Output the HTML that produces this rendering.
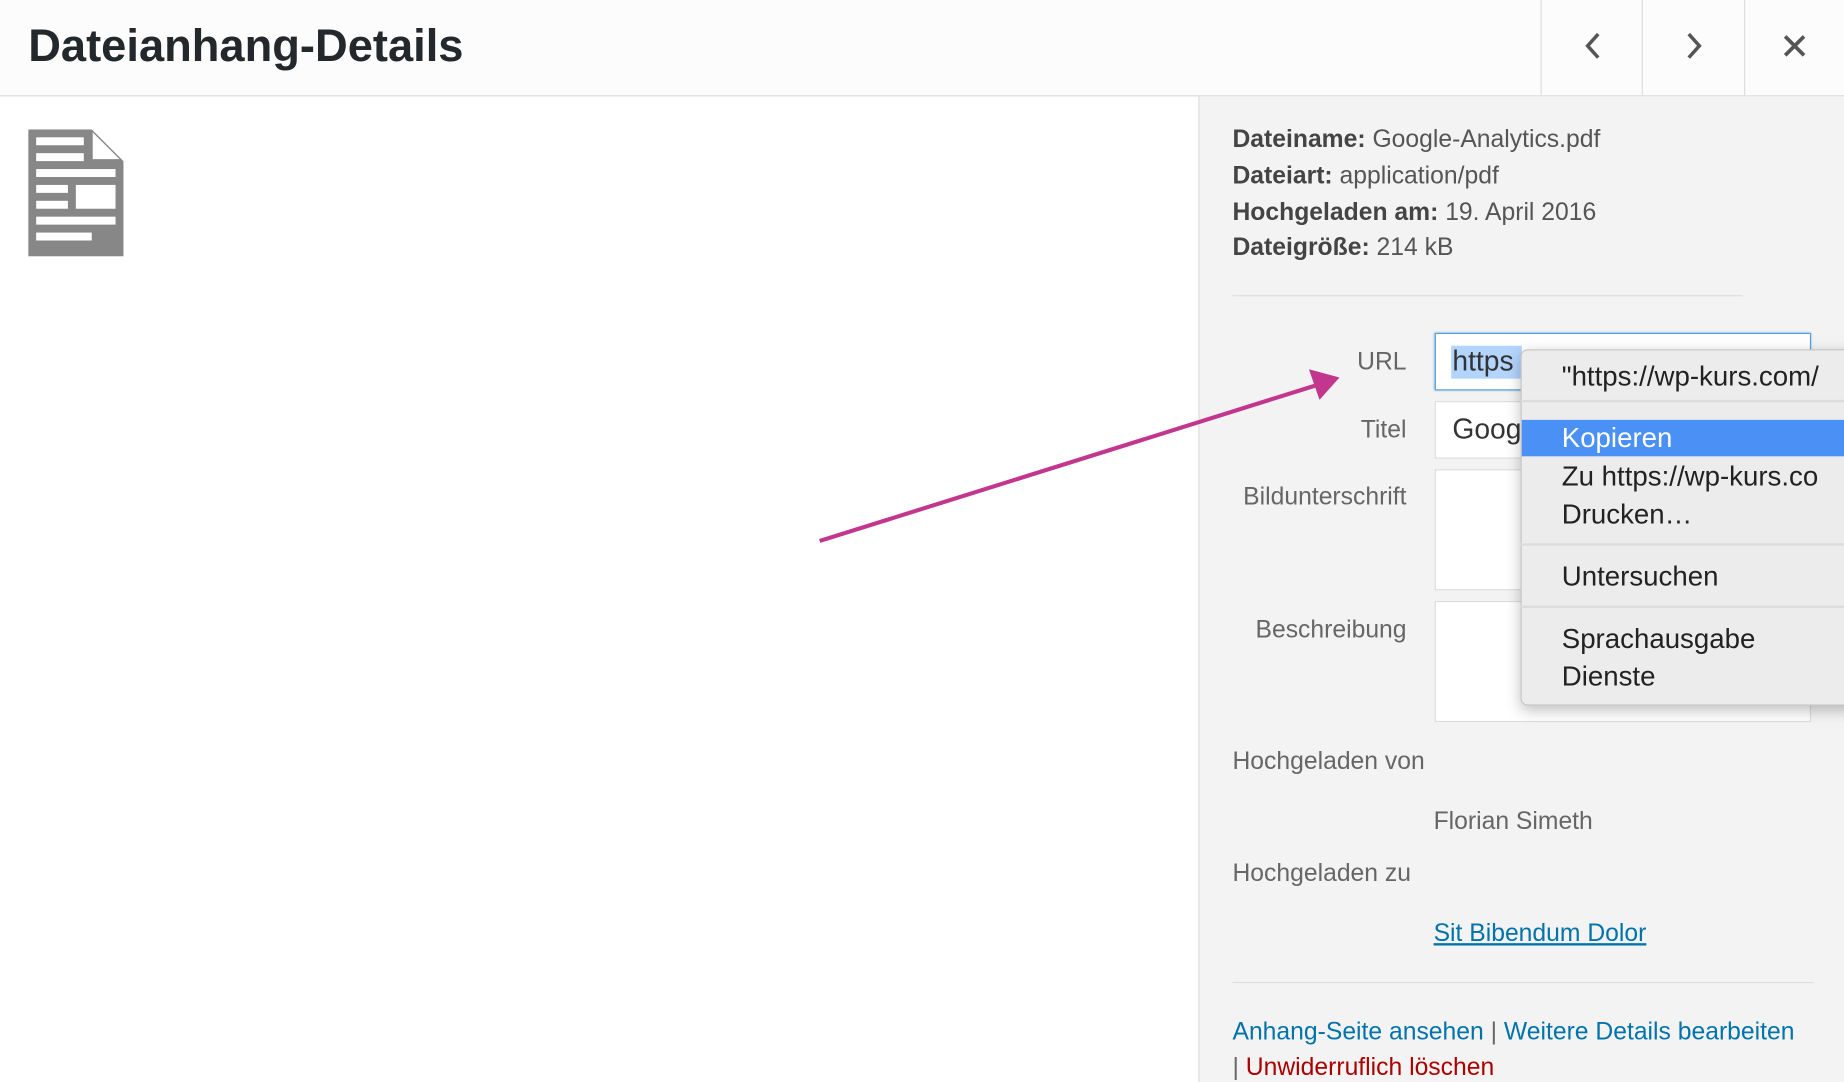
<!DOCTYPE html>
<html><head><meta charset="utf-8"><style>
html,body{margin:0;padding:0;width:1844px;height:1082px;overflow:hidden;background:#fff}
#w{position:absolute;left:0;top:0;width:1568px;height:920px;transform:scale(1.17602);transform-origin:0 0;font-family:"Liberation Sans",sans-serif;}
.a{position:absolute;white-space:nowrap}
.hdr{left:0;top:0;width:1568px;height:81px;background:#fcfcfc;border-bottom:1px solid #ddd}
.side{left:1019px;top:82px;width:549px;height:838px;background:#f3f3f3;border-left:1px solid #ddd}
.info{left:1048px;font-size:21px;color:#555}
.info b{color:#444}
.lbl{font-size:21px;color:#666;text-align:right;right:372px}
.inp{left:1220px;width:320px;background:#fff;border:1px solid #ddd;box-sizing:border-box}
.mi{left:1328px;font-size:23.5px;color:#222}
.sep{left:1293px;width:275px;height:2px;background:#dcdcdc}
</style></head><body><div id="w">
<div class="a hdr"></div>
<div class="a" style="left:24px;top:18px;font-size:38.5px;font-weight:bold;color:#23282d">Dateianhang-Details</div>
<div class="a" style="left:1310px;top:0;width:1px;height:81px;background:#ddd"></div>
<div class="a" style="left:1396px;top:0;width:1px;height:81px;background:#ddd"></div>
<div class="a" style="left:1483px;top:0;width:1px;height:81px;background:#ddd"></div>
<svg class="a" style="left:1340px;top:24px" width="30" height="30" viewBox="0 0 30 30"><path d="M19 5 L10 15 L19 25" fill="none" stroke="#555" stroke-width="3"/></svg>
<svg class="a" style="left:1425px;top:24px" width="30" height="30" viewBox="0 0 30 30"><path d="M11 5 L20 15 L11 25" fill="none" stroke="#555" stroke-width="3"/></svg>
<svg class="a" style="left:1512px;top:25px" width="28" height="28" viewBox="0 0 28 28"><path d="M6 6 L22 22 M22 6 L6 22" fill="none" stroke="#555" stroke-width="3.2"/></svg>

<svg class="a" style="left:24px;top:110px" width="81" height="108" viewBox="0 0 96 128">
<path d="M0 0 H64 L96 32 V128 H0 Z" fill="#878787"/>
<path d="M65 3 L92 30 H65 Z" fill="#fff"/>
<g fill="#fff"><rect x="8" y="8" width="48" height="8"/><rect x="8" y="24" width="48" height="8"/><rect x="8" y="40" width="80" height="8"/><rect x="8" y="56" width="32" height="8"/><rect x="48" y="56" width="40" height="24"/><rect x="8" y="72" width="32" height="8"/><rect x="8" y="88" width="80" height="8"/><rect x="8" y="104" width="56" height="8"/></g>
</svg>

<div class="a side"></div>
<div class="a info" style="top:107px"><b>Dateiname:</b> Google-Analytics.pdf</div>
<div class="a info" style="top:138px"><b>Dateiart:</b> application/pdf</div>
<div class="a info" style="top:169px"><b>Hochgeladen am:</b> 19. April 2016</div>
<div class="a info" style="top:199px"><b>Dateigröße:</b> 214 kB</div>
<div class="a" style="left:1048px;top:251px;width:434px;height:1px;background:#ddd"></div>

<div class="a lbl" style="top:296px">URL</div>
<div class="a lbl" style="top:354px">Titel</div>
<div class="a lbl" style="top:411px">Bildunterschrift</div>
<div class="a lbl" style="top:524px">Beschreibung</div>
<div class="a inp" style="top:283px;height:49px;border:1px solid #5b9dd9;box-shadow:0 0 2px rgba(30,140,190,.8)"></div>
<div class="a" style="left:1234px;top:294px;height:28px;width:60px;background:#b3d4fc"></div>
<div class="a" style="left:1235px;top:294px;font-size:24px;color:#333">https</div>
<div class="a inp" style="top:341px;height:49px"></div>
<div class="a" style="left:1235px;top:352px;font-size:24px;color:#333">Goog</div>
<div class="a inp" style="top:399px;height:103px"></div>
<div class="a inp" style="top:511px;height:103px"></div>

<div class="a info" style="top:636px;color:#666">Hochgeladen von</div>
<div class="a info" style="left:1219px;top:687px;color:#666">Florian Simeth</div>
<div class="a info" style="top:731px;color:#666">Hochgeladen zu</div>
<div class="a info" style="left:1219px;top:782px;color:#0073aa;text-decoration:underline">Sit Bibendum Dolor</div>
<div class="a" style="left:1048px;top:835px;width:494px;height:1px;background:#ddd"></div>
<div class="a info" style="top:866px;color:#666"><span style="color:#0073aa">Anhang-Seite ansehen</span> | <span style="color:#0073aa">Weitere Details bearbeiten</span></div>
<div class="a info" style="top:896px;color:#666">| <span style="color:#a00">Unwiderruflich löschen</span></div>

<div class="a" style="left:1293px;top:297px;width:290px;height:301px;background:#ececec;border:1px solid #c8c8c8;border-radius:6px;box-shadow:0 4px 12px rgba(0,0,0,.25)"></div>
<div class="a mi" style="top:307px">"https://wp-kurs.com/</div>
<div class="a sep" style="top:340px"></div>
<div class="a" style="left:1294px;top:357px;width:274px;height:31px;background:#4a90f5"></div>
<div class="a mi" style="top:359px;color:#fff">Kopieren</div>
<div class="a mi" style="top:392px">Zu https://wp-kurs.co</div>
<div class="a mi" style="top:424px">Drucken…</div>
<div class="a sep" style="top:462px"></div>
<div class="a mi" style="top:477px">Untersuchen</div>
<div class="a sep" style="top:515px"></div>
<div class="a mi" style="top:530px">Sprachausgabe</div>
<div class="a mi" style="top:562px">Dienste</div>

<svg class="a" style="left:0;top:0" width="1568" height="920"><line x1="697" y1="460" x2="1118" y2="328" stroke="#c2378d" stroke-width="3.5"/><path d="M1139 321 L1113 314 L1122 340 Z" fill="#c2378d"/></svg>
</div></body></html>
